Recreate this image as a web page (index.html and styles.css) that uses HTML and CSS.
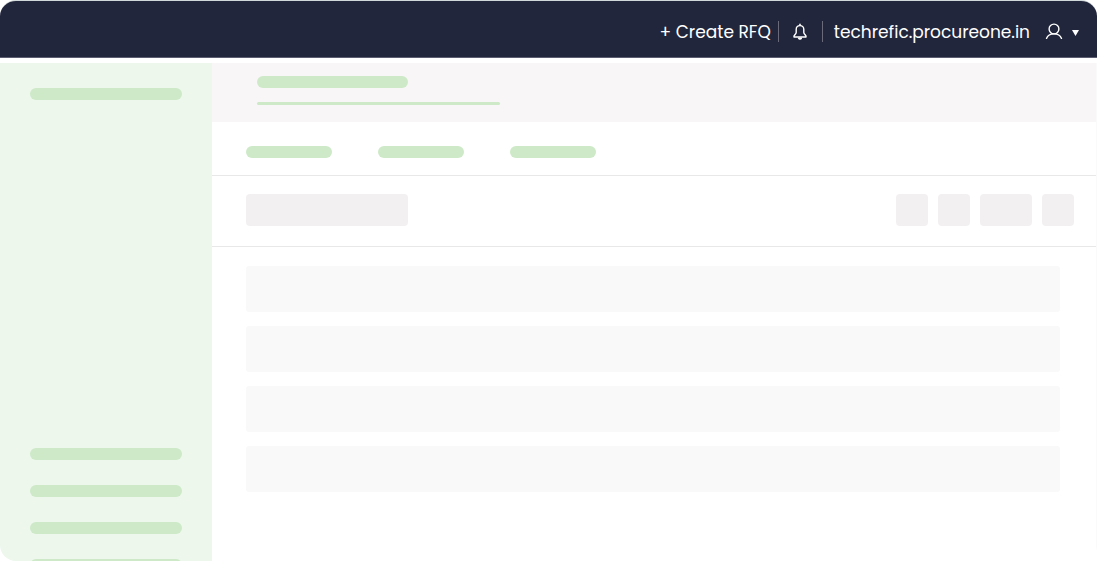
FILE: index.html
```html
<!DOCTYPE html>
<html lang="en">
<head>
<meta charset="utf-8">
<meta name="viewport" content="width=device-width, initial-scale=1">
<title>ProcureOne</title>
<link rel="stylesheet" href="styles.css">
</head>
<body>
<div class="shell">
  <header class="topbar">
    <button class="create" type="button">+ Create RFQ</button>
    <button class="bell" type="button" aria-label="Notifications">
      <svg width="14" height="18" viewBox="0 0 14 18" fill="none" stroke="currentColor" stroke-width="1.4" stroke-linejoin="round" stroke-linecap="round">
        <path d="M7 2.6C4.600 2.600 3.200 4.300 3.200 6.500V9.500C3.200 11 1 12.300 1 13.200V14H13V13.200C13 12.300 10.800 11 10.800 9.500V6.500C10.800 4.300 9.400 2.600 7 2.600Z"/>
        <path d="M7 1.200V2.400"/>
        <path d="M5.600 15.200A1.500 1.500 0 0 0 8.400 15.200Z" fill="currentColor"/>
      </svg>
    </button>
    <a class="domain" href="#">techrefic.procureone.in</a>
    <button class="account" type="button" aria-label="Account">
      <svg width="18" height="17" viewBox="0 0 18 17" fill="none" stroke="currentColor" stroke-width="1.4" stroke-linecap="round">
        <circle cx="9" cy="6" r="4.900"/>
        <path d="M1.500 15.400C2.700 12.400 5.400 10.900 9 10.900S15.300 12.400 16.500 15.400"/>
      </svg>
      <svg class="caret" width="7" height="6" viewBox="0 0 7 6" fill="currentColor"><path d="M0 0H7L3.500 6Z"/></svg>
    </button>
  </header>
  <div class="body">
    <nav class="sidebar" aria-label="Main">
      <span class="bar"></span>
      <div class="sidebar-end">
        <span class="bar"></span>
        <span class="bar"></span>
        <span class="bar"></span>
        <span class="bar"></span>
      </div>
    </nav>
    <main class="content">
      <div class="heading">
        <span class="bar title"></span>
        <span class="underline"></span>
      </div>
      <div class="tabs">
        <span class="bar tab"></span>
        <span class="bar tab"></span>
        <span class="bar tab"></span>
      </div>
      <div class="tools">
        <span class="block search"></span>
        <span class="block"></span>
        <span class="block"></span>
        <span class="block wide"></span>
        <span class="block"></span>
      </div>
      <div class="rows">
        <div class="row"></div>
        <div class="row"></div>
        <div class="row"></div>
        <div class="row"></div>
      </div>
    </main>
  </div>
</div>
</body>
</html>
```
FILE: styles.css
```css
* {
  box-sizing: border-box;
}

body {
  margin: 0;
  background: #fff;
  font-family: Poppins, Lato, "Open Sans", sans-serif;
}

.shell {
  display: flex;
  flex-direction: column;
  min-height: calc(100vh - 1px);
  border-top: 1px solid #d0d8da;
  border-radius: 16px;
  overflow: hidden;
}

.topbar {
  display: flex;
  align-items: center;
  justify-content: flex-end;
  height: 57px;
  padding: 5px 18px 0 16px;
  background: #22263c;
  border-bottom: 1px solid #5c5d70;
  color: #fff;
  font-size: 17px;
  line-height: 24px;
}

.topbar button {
  display: flex;
  align-items: center;
  padding: 0;
  border: 0;
  background: none;
  color: inherit;
  font: inherit;
}

.topbar .create {
  margin-right: 7px;
}

.topbar .bell {
  justify-content: center;
  width: 45px;
  height: 21px;
  margin-right: 11px;
  border: solid #696b7a;
  border-width: 0 1px;
}

.domain {
  color: inherit;
  text-decoration: none;
}

.topbar .account {
  gap: 9px;
  margin-left: 15px;
}

.caret {
  margin-top: 2px;
}

.body {
  display: flex;
  flex: 1;
  margin-top: 5px;
}

.bar {
  display: block;
  height: 12px;
  border-radius: 6px;
  background: #cde9c7;
}

.sidebar {
  display: flex;
  flex-direction: column;
  justify-content: space-between;
  width: 212px;
  padding: 25px 30px 0;
  background: #edf7ec;
  overflow: hidden;
}

.sidebar-end {
  display: grid;
  gap: 25px;
  margin-bottom: -10px;
}

.content {
  flex: 1;
  border-right: 1px solid #fafafa;
}

.heading {
  display: grid;
  gap: 14px;
  height: 59px;
  padding: 13px 45px 0;
  align-content: start;
  background: #f8f6f7;
}

.title {
  width: 151px;
}

.underline {
  width: 243px;
  height: 3px;
  border-radius: 2px;
  background: #cde9c7;
}

.tabs {
  display: flex;
  gap: 46px;
  padding: 24px 34px 17px;
  border-bottom: 1px solid #e8e8e8;
}

.tab {
  width: 86px;
}

.tools {
  display: flex;
  gap: 10px;
  padding: 18px 22px 20px 34px;
  border-bottom: 1px solid #e8e8e8;
}

.block {
  width: 32px;
  height: 32px;
  border-radius: 4px;
  background: #f2f0f1;
}

.search {
  width: 162px;
  margin-right: auto;
}

.wide {
  width: 52px;
}

.rows {
  display: grid;
  gap: 14px;
  padding: 19px 36px 19px 34px;
}

.row {
  height: 46px;
  border-radius: 3px;
  background: #f9f9f9;
}
```
